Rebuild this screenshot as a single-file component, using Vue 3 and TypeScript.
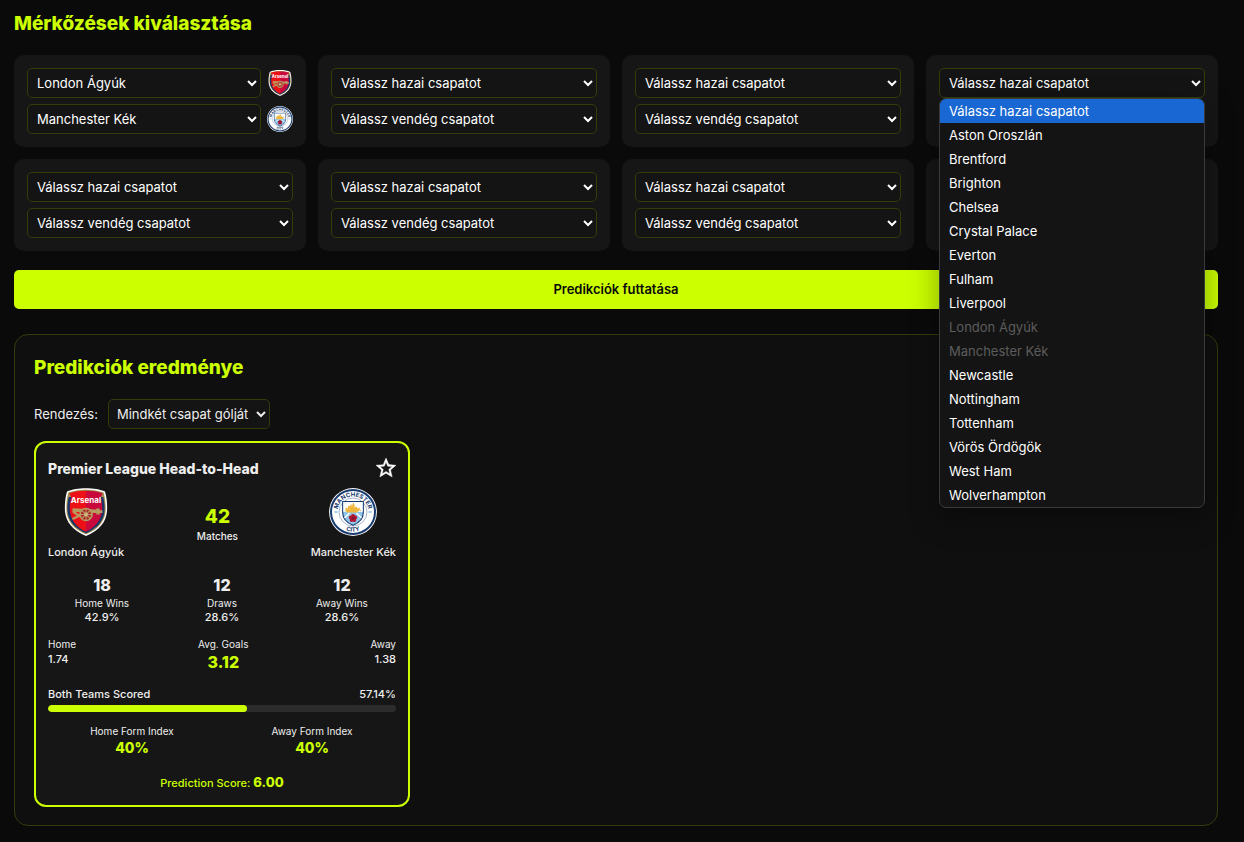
<script setup lang="ts">
import { ref } from 'vue'

interface Match {
  home: string
  away: string
  picked: boolean
}

const teams: string[] = [
  'Aston Oroszlán', 'Brentford', 'Brighton', 'Chelsea', 'Crystal Palace', 'Everton',
  'Fulham', 'Liverpool', 'London Ágyúk', 'Manchester Kék', 'Newcastle', 'Nottingham',
  'Tottenham', 'Vörös Ördögök', 'West Ham', 'Wolverhampton',
]

const arsenal = `
  <path d="M24 .2C17 .2 9.5 1.400 5 3.600 3.200 10 2.500 17 3 23.500 4 34 10.500 42.500 24 47.900 37.500 42.500 44 34 45 23.500 45.500 17 44.800 10 43 3.600 38.500 1.400 31 .2 24 .2Z" fill="#fff"/>
  <path d="M24 1.700C17.500 1.700 10.500 2.700 6.400 4.600 4.700 11 4.100 17 4.500 23.300 5.300 33.300 11.500 41.300 24 46.300 36.500 41.300 42.700 33.300 43.500 23.300 43.900 17 43.300 11 41.600 4.600 37.500 2.700 30.500 1.700 24 1.700Z" fill="#a38a4c"/>
  <path d="M6.800 9C5.500 14 5.200 18.500 5.500 23 6.200 32.500 12.200 40 24 45.200 35.800 40 41.800 32.500 42.500 23 42.800 18.500 42.500 14 41.200 9Z" fill="#14366b"/>
  <path d="M24 2.700c-6 0-12 .8-16.500 2.500l1.800 4.300c-1.500 5-1.800 9.500-1.400 13.500C8.900 32 14 39 24 43.800Z" fill="#ed1016"/>
  <path d="M24 2.700c6 0 12 .8 16.500 2.500l-1.800 4.300c1.500 5 1.800 9.500 1.400 13.500C39.100 32 34 39 24 43.800Z" fill="#c9093c"/>
  <g fill="none" stroke="#b79b5e">
    <path d="M10.500 22 37 23.500M36 20.500v6" stroke-width="3.400"/>
    <path d="M36 23.600h4.500" stroke-width="2.800"/>
    <path d="m10.500 31 9.500-4.500m-9-3 7 5" stroke-width="2.200"/>
    <circle cx="24" cy="26.500" r="6" stroke-width="1.700" fill="#ad2730"/>
    <path d="M24 20.500v12m-6-6h12m-10.200-4.200 8.400 8.400m0-8.400-8.400 8.400" stroke-width="1.100"/>
  </g>
  <circle cx="24" cy="26.500" r="1.900" fill="#d0b57c"/>
  <text x="24" y="15" text-anchor="middle" font-family="Inter, sans-serif" font-weight="700" font-size="8" fill="#fff">Arsenal</text>`

const city = `
  <circle cx="24" cy="24" r="23.900" fill="#fff"/>
  <circle cx="24" cy="24" r="22" fill="#fff" stroke="#173a6e" stroke-width="2"/>
  <path id="city-arc-top" d="M8.500 24a15.500 15.500 0 0 1 31 0" fill="none"/>
  <path id="city-arc-low" d="M4.300 24a19.700 19.700 0 0 0 39.400 0" fill="none"/>
  <circle cx="24" cy="24" r="14" fill="#fff" stroke="#7f95b5" stroke-width=".7"/>
  <path d="M13.700 13.500h20.600v11.200c0 6.500-4.300 10.100-10.300 12.600-6-2.500-10.300-6.100-10.300-12.600Z" fill="#8fc5eb" stroke="#173a6e" stroke-width="1.100"/>
  <path d="M14.300 14h19.400v9.800H14.300Z" fill="#fff"/>
  <path d="m16 19.500 3 1v-3l2 1 1-3 1 3 1-4 2 3-1 2 3-1v2l3-1-1 3-2 2H18Z" fill="#f0b73c"/>
  <path d="M16 22.500q4 2 8 0t8 0" fill="none" stroke="#eab44a" stroke-width="1.200"/>
  <path d="m15.500 30 5-5m7 0 5 5" stroke="#fff" stroke-width="1.400"/>
  <g fill="#b01632"><circle cx="24" cy="28" r="2"/><circle cx="21.800" cy="29.600" r="2"/><circle cx="26.200" cy="29.600" r="2"/><circle cx="22.700" cy="32.100" r="2"/><circle cx="25.300" cy="32.100" r="2"/></g>
  <circle cx="24" cy="30.300" r="1.500" fill="#7d1a30"/>
  <path d="M5.500 24h3m31 0h3" stroke="#9fcdee" stroke-width="2"/>
  <g font-family="Inter, sans-serif" font-weight="700" font-size="6" fill="#173a6e" text-anchor="middle">
    <text><textPath href="#city-arc-top" startOffset="50%">MANCHESTER</textPath></text>
    <text><textPath href="#city-arc-low" startOffset="50%">CITY</textPath></text>
  </g>`

const matches = ref<Match[]>(
  Array.from({ length: 8 }, (_, i) => ({
    home: i === 0 ? 'London Ágyúk' : '',
    away: i === 0 ? 'Manchester Kék' : '',
    picked: i === 0,
  })),
)

const openIndex = ref<number>(3)
const sort = ref<string>('both')
const bothScored = 57.14

const isTaken = (team: string): boolean =>
  matches.value.some((m) => m.home === team || m.away === team)

function choose(team: string): void {
  if (isTaken(team)) return
  matches.value[openIndex.value].home = team
  openIndex.value = -1
}

const stats = [
  { value: '18', label: 'Home Wins', share: '42.9%' },
  { value: '12', label: 'Draws', share: '28.6%' },
  { value: '12', label: 'Away Wins', share: '28.6%' },
]
</script>

<template>
  <main class="page">
    <h1 class="heading">Mérkőzések kiválasztása</h1>

    <section class="matches">
      <div v-for="(m, i) in matches" :key="i" class="match">
        <div class="pick">
          <select v-model="m.home" class="select" aria-label="Hazai csapat">
            <option value="">Válassz hazai csapatot</option>
            <option v-for="t in teams" :key="t" :value="t">{{ t }}</option>
          </select>
          <svg v-if="m.picked" class="mini" viewBox="0 0 48 48" role="img" aria-label="London Ágyúk" v-html="arsenal"></svg>
          <ul v-if="i === openIndex" class="menu" role="listbox" aria-label="Hazai csapatok">
            <li class="option active" role="option" aria-selected="true">Válassz hazai csapatot</li>
            <li
              v-for="t in teams"
              :key="t"
              class="option"
              :class="{ taken: isTaken(t) }"
              role="option"
              aria-selected="false"
              :aria-disabled="isTaken(t)"
              @click="choose(t)"
            >{{ t }}</li>
          </ul>
        </div>
        <div class="pick">
          <select v-model="m.away" class="select" aria-label="Vendég csapat">
            <option value="">Válassz vendég csapatot</option>
            <option v-for="t in teams" :key="t" :value="t">{{ t }}</option>
          </select>
          <svg v-if="m.picked" class="mini" viewBox="0 0 48 48" role="img" aria-label="Manchester Kék" v-html="city"></svg>
        </div>
      </div>
    </section>

    <button type="button" class="run">Predikciók futtatása</button>

    <section class="results">
      <h2 class="heading">Predikciók eredménye</h2>
      <div class="sorting">
        <label for="sort">Rendezés:</label>
        <select id="sort" v-model="sort" class="select sort">
          <option value="both">Mindkét csapat gólját</option>
        </select>
      </div>

      <div class="cards">
        <article class="card">
          <header class="card-head">
            <h3>Premier League Head-to-Head</h3>
            <button type="button" class="star" aria-label="Kedvenc">
              <svg viewBox="0 0 24 24"><path fill="currentColor" stroke="currentColor" stroke-width=".4" d="m22 9.240-7.190-.62L12 2 9.190 8.630 2 9.240l5.460 4.730L5.820 21 12 17.270 18.180 21l-1.630-7.030zM12 15.400l-3.760 2.270 1-4.280-3.320-2.880 4.380-.38L12 6.100l1.710 4.040 4.380.38-3.320 2.880 1 4.280z" /></svg>
            </button>
          </header>

          <div class="versus">
            <div class="team">
              <svg class="crest" viewBox="0 0 48 48" role="img" aria-label="London Ágyúk" v-html="arsenal"></svg>
              <span>London Ágyúk</span>
            </div>
            <div class="total"><strong>42</strong><span>Matches</span></div>
            <div class="team">
              <svg class="crest" viewBox="0 0 48 48" role="img" aria-label="Manchester Kék" v-html="city"></svg>
              <span>Manchester Kék</span>
            </div>
          </div>

          <div class="stats">
            <div v-for="s in stats" :key="s.label" class="stat">
              <strong>{{ s.value }}</strong>
              <span class="tiny">{{ s.label }}</span>
              <span class="share">{{ s.share }}</span>
            </div>
          </div>

          <div class="goals">
            <div class="goal"><span class="tiny">Home</span><span class="avg">1.74</span></div>
            <div class="goal mid"><span class="tiny">Avg. Goals</span><strong>3.12</strong></div>
            <div class="goal end"><span class="tiny">Away</span><span class="avg">1.38</span></div>
          </div>

          <div class="scored"><span>Both Teams Scored</span><span>{{ bothScored }}%</span></div>
          <div class="track"><div class="fill" :style="{ width: bothScored + '%' }"></div></div>

          <div class="forms">
            <div class="form"><span class="tiny">Home Form Index</span><strong>40%</strong></div>
            <div class="form"><span class="tiny">Away Form Index</span><strong>40%</strong></div>
          </div>

          <p class="score">Prediction Score: <strong>6.00</strong></p>
        </article>
      </div>
    </section>
  </main>
</template>

<style>
body {
  margin: 0;
  background: #0a0a0a;
}
</style>

<style scoped>
* {
  box-sizing: border-box;
}
.page {
  padding: 11px 26px 16px 14px;
  font-family: Inter, "Noto Sans", sans-serif;
  font-size: 13px;
  color: #fff;
}
.heading {
  margin: 0 0 18px;
  font-size: 19px;
  line-height: 26px;
  font-weight: 800;
  color: #ccff00;
}
.matches {
  display: grid;
  grid-template-columns: repeat(4, minmax(0, 1fr));
  gap: 12px;
}
.match {
  display: flex;
  flex-direction: column;
  gap: 6px;
  padding: 13px;
  border-radius: 10px;
  background: #161616;
}
.pick {
  position: relative;
  display: flex;
  align-items: center;
  gap: 6px;
}
.select {
  flex: 1;
  min-width: 0;
  height: 30px;
  padding: 0 5px;
  border: 1px solid #333d0c;
  border-radius: 5px;
  background: #141414;
  color: #fff;
  font-family: inherit;
  font-size: 13px;
}
.mini {
  flex: none;
  width: 26px;
  height: 26px;
}
.menu {
  position: absolute;
  z-index: 5;
  top: 100%;
  left: 0;
  right: 0;
  margin: 0;
  padding: 0;
  overflow: hidden;
  list-style: none;
  border: 1px solid #3b3b3b;
  border-radius: 7px;
  background: #141414;
  box-shadow: 0 10px 30px rgba(0, 0, 0, 0.35);
}
.option {
  height: 24px;
  padding: 0 9px;
  line-height: 24px;
}
.option.active {
  background: #1967d2;
}
.option.taken {
  color: #5c5c5c;
}
.run {
  display: block;
  width: 100%;
  height: 39px;
  margin: 19px 0 25px;
  padding: 0 0 2px;
  border: 0;
  border-radius: 5px;
  background: #ccff00;
  color: #0a0a0a;
  font-family: inherit;
  font-size: 13px;
  font-weight: 600;
}
.results {
  padding: 20px 19px 18px;
  border: 1px solid #333d0c;
  border-radius: 14px;
  background: #0f0f0f;
}
.sorting {
  display: flex;
  align-items: center;
  gap: 10px;
  margin-bottom: 12px;
  color: #eee;
}
.sort {
  flex: none;
  width: 162px;
  padding: 0 4px;
  color: #eee;
}
.cards {
  display: grid;
  grid-template-columns: repeat(3, minmax(0, 1fr));
  gap: 18px;
}
.card {
  padding: 12px;
  border: 2px solid #ccff00;
  border-radius: 12px;
  background: #161616;
  color: #eee;
  font-weight: 500;
}
.card strong {
  font-weight: 800;
}
.card-head {
  display: flex;
  align-items: center;
  justify-content: space-between;
  height: 26px;
  margin-bottom: 7px;
}
.card-head h3 {
  margin: 0;
  font-size: 14px;
  font-weight: 800;
}
.star {
  display: flex;
  width: 20px;
  padding: 0;
  border: 0;
  background: none;
  color: #fff;
}
.star svg {
  flex: none;
  width: 24px;
  height: 24px;
  margin: 0 -2px;
}
.versus,
.goals,
.scored {
  display: flex;
  justify-content: space-between;
}
.versus {
  align-items: center;
  margin-bottom: 14px;
}
.team,
.total,
.stat,
.goal,
.form {
  display: flex;
  flex-direction: column;
  align-items: center;
}
.team {
  gap: 8px;
  font-size: 11px;
  line-height: 16px;
}
.crest {
  width: 48px;
  height: 48px;
}
.total {
  font-size: 10px;
  line-height: 14px;
}
.total strong {
  font-size: 19px;
  line-height: 24px;
  color: #ccff00;
}
.stats {
  display: grid;
  grid-template-columns: repeat(3, 1fr);
  gap: 12px;
  margin-bottom: 13px;
}
.stat strong,
.goal strong {
  font-size: 16px;
  line-height: 22px;
}
.tiny {
  font-size: 10px;
  line-height: 14px;
  font-weight: 400;
}
.share {
  font-size: 11px;
  line-height: 14px;
}
.goals {
  margin-bottom: 13px;
}
.goal {
  align-items: flex-start;
}
.goal.mid {
  align-items: center;
}
.goal.end {
  align-items: flex-end;
}
.avg {
  font-size: 11px;
  line-height: 16px;
}
.goal strong,
.form strong {
  color: #ccff00;
}
.scored {
  margin-bottom: 3px;
  font-size: 11px;
  line-height: 16px;
}
.track {
  height: 7px;
  margin-bottom: 12px;
  overflow: hidden;
  border-radius: 4px;
  background: #2c2c2c;
}
.fill {
  height: 100%;
  border-radius: 4px;
  background: #ccff00;
}
.forms {
  display: grid;
  grid-template-columns: repeat(2, 1fr);
  gap: 12px;
  margin-bottom: 14px;
}
.form strong {
  font-size: 14px;
  line-height: 20px;
}
.score {
  margin: 0;
  text-align: center;
  font-size: 11px;
  line-height: 20px;
  color: #ccff00;
}
.score strong {
  font-size: 13px;
}
</style>
